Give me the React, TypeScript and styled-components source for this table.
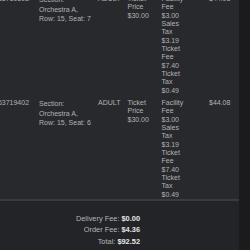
import React, { useLayoutEffect, useRef } from "react";
import styled, { createGlobalStyle } from "styled-components";

const GlobalStyle = createGlobalStyle`
  html, body {
    margin: 0;
    padding: 0;
    background: #1b1b1d;
    font-family: "Liberation Sans", Arial, sans-serif;
  }
`;

const Page = styled.div`
  display: flex;
  height: 250px;
  overflow: hidden;
`;

const Panel = styled.div`
  width: 239px;
  display: flex;
  flex-direction: column;
  background: #28292c;
`;

const Scroller = styled.div`
  flex: 1;
  min-height: 0;
  overflow: auto;
  scrollbar-width: none;
  &::-webkit-scrollbar {
    display: none;
  }
`;

const Table = styled.div`
  width: 262px;
  padding-left: 4px;
  color: #b2b2b5;
  font-size: 7px;
  line-height: 8.33px;
`;

const Row = styled.div<{ $head?: boolean }>`
  display: grid;
  grid-template-columns: 45px 59px 29.5px 34px 47.5px 1fr;
  align-items: start;
  padding-top: ${({ $head }) => ($head ? "5px" : "4px")};
  height: ${({ $head }) => ($head ? "18px" : "104px")};
  box-sizing: border-box;
  font-weight: ${({ $head }) => ($head ? 700 : 400)};
`;

const Cell = styled.div<{ $narrow?: boolean }>`
  max-width: ${({ $narrow }) => ($narrow ? "27px" : "none")};
`;

const SeatLine = styled.div`
  line-height: 9.6px;
`;

const Footer = styled.div`
  border-top: 2px solid #3a3b3e;
  background: #232427;
  height: 51px;
  box-sizing: border-box;
  padding-top: 12px;
`;

const Summary = styled.div`
  width: 140px;
  text-align: right;
  font-size: 7.4px;
  line-height: 11.3px;
  color: #b6b6b8;
`;

const Amount = styled.b`
  color: #e6e6e8;
`;

type Ticket = {
  id: string;
  section: string;
  row: number;
  seat: number;
  type: string;
  price: string;
  fees: { label: string; amount: string }[];
  total: string;
};

const fees = [
  { label: "Facility Fee", amount: "$3.00" },
  { label: "Sales Tax", amount: "$3.19" },
  { label: "Ticket Fee", amount: "$7.40" },
  { label: "Ticket Tax", amount: "$0.49" },
];

const tickets: Ticket[] = [
  {
    id: "863719392",
    section: "Orchestra A",
    row: 15,
    seat: 7,
    type: "ADULT",
    price: "$30.00",
    fees,
    total: "$44.08",
  },
  {
    id: "863719402",
    section: "Orchestra A",
    row: 15,
    seat: 6,
    type: "ADULT",
    price: "$30.00",
    fees,
    total: "$44.08",
  },
];

export default function App() {
  const scrollRef = useRef<HTMLDivElement>(null);

  useLayoutEffect(() => {
    const el = scrollRef.current;
    if (el) {
      el.scrollLeft = 10;
      el.scrollTop = 27;
    }
  }, []);

  return (
    <Page>
      <GlobalStyle />
      <Panel>
        <Scroller ref={scrollRef}>
          <Table>
            <Row $head>
              <Cell>Ticket #</Cell>
              <Cell>Seat</Cell>
              <Cell>Type</Cell>
              <Cell>Price</Cell>
              <Cell>Fees</Cell>
              <Cell>Total</Cell>
            </Row>
            {tickets.map((t) => (
              <Row key={t.id}>
                <Cell>{t.id}</Cell>
                <Cell>
                  <SeatLine>Section:</SeatLine>
                  <SeatLine>{t.section},</SeatLine>
                  <SeatLine>
                    Row: {t.row}, Seat: {t.seat}
                  </SeatLine>
                </Cell>
                <Cell>{t.type}</Cell>
                <Cell $narrow>Ticket Price {t.price}</Cell>
                <Cell $narrow>
                  {t.fees.map((f) => (
                    <div key={f.label}>
                      {f.label} {f.amount}
                    </div>
                  ))}
                </Cell>
                <Cell>{t.total}</Cell>
              </Row>
            ))}
          </Table>
        </Scroller>
        <Footer>
          <Summary>
            <div>
              Delivery Fee: <Amount>$0.00</Amount>
            </div>
            <div>
              Order Fee: <Amount>$4.36</Amount>
            </div>
            <div>
              Total: <Amount>$92.52</Amount>
            </div>
          </Summary>
        </Footer>
      </Panel>
    </Page>
  );
}
